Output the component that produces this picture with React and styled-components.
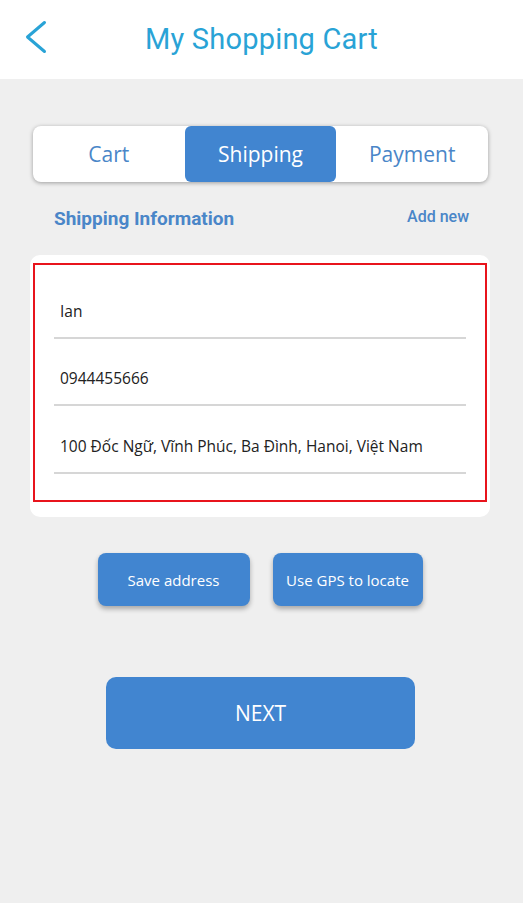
import React from 'react';
import styled, { createGlobalStyle } from 'styled-components';

const GlobalStyle = createGlobalStyle`
  html, body {
    margin: 0;
    padding: 0;
    background: #efefef;
  }
  body {
    font-family: 'Open Sans', 'Noto Sans', sans-serif;
  }
`;

const Page = styled.div`
  width: 523px;
  min-height: 903px;
  background: #efefef;
  display: flex;
  flex-direction: column;
`;

const Header = styled.header`
  height: 79px;
  background: #ffffff;
  position: relative;
  display: flex;
  align-items: center;
  justify-content: center;
`;

const BackButton = styled.button`
  position: absolute;
  left: 22px;
  top: 18px;
  width: 28px;
  height: 38px;
  border: 0;
  padding: 0;
  background: transparent;
  display: flex;
`;

const Title = styled.h1`
  margin: 0 0 2px 0;
  font-family: Roboto, sans-serif;
  font-weight: 400;
  font-size: 29px;
  color: #29a3d6;
  letter-spacing: 0.2px;
`;

const Content = styled.main`
  display: flex;
  flex-direction: column;
  padding: 47px 33px 0 30px;
`;

const Tabs = styled.div`
  margin: 0 2px 0 3px;
  height: 56px;
  background: #ffffff;
  border-radius: 8px;
  box-shadow: 0 1px 4px rgba(0, 0, 0, 0.35);
  display: grid;
  grid-template-columns: repeat(3, 1fr);
`;

const Tab = styled.div`
  display: flex;
  align-items: center;
  justify-content: center;
  border-radius: 6px;
  font-size: 21px;
  color: ${(p) => (p.$active ? '#ffffff' : '#4a86c8')};
  background: ${(p) => (p.$active ? '#4185d0' : 'transparent')};
`;

const SectionHead = styled.div`
  display: flex;
  justify-content: space-between;
  align-items: center;
  padding: 0 21px 0 24px;
  margin-top: 23px;
  height: 26px;
  font-family: Roboto, sans-serif;
  color: #4a86c8;
`;

const SectionTitle = styled.span`
  font-size: 19px;
  font-weight: 700;
`;

const AddLink = styled.span`
  font-size: 16px;
  font-weight: 500;
  margin-top: -4px;
`;

const Card = styled.div`
  margin-top: 24px;
  background: #ffffff;
  border-radius: 10px;
  padding: 8px 3px 15px 3px;
`;

const Form = styled.div`
  border: 2px solid #e8141c;
  padding: 0 19px 26px 19px;
  display: flex;
  flex-direction: column;
`;

const Field = styled.div`
  height: ${(p) => p.$h}px;
  display: flex;
  align-items: flex-end;
  padding: 0 0 15px 6px;
  box-sizing: border-box;
  border-bottom: 2px solid #d6d6d6;
  font-size: 15.5px;
  color: #222222;
`;

const ButtonRow = styled.div`
  display: flex;
  justify-content: center;
  gap: 23px;
  margin-top: 36px;
`;

const SmallButton = styled.button`
  width: ${(p) => p.$w}px;
  height: 53px;
  border: 0;
  border-radius: 8px;
  background: #4185d0;
  color: #ffffff;
  font-family: 'Open Sans', sans-serif;
  font-size: 15px;
  box-shadow: 0 3px 5px rgba(0, 0, 0, 0.3);
`;

const NextButton = styled.button`
  align-self: center;
  margin-top: 71px;
  margin-left: 1px;
  width: 309px;
  height: 72px;
  border: 0;
  border-radius: 10px;
  background: #4185d0;
  color: #ffffff;
  font-family: 'Open Sans', sans-serif;
  font-size: 21px;
`;

export default function App() {
  return (
    <Page>
      <GlobalStyle />
      <Header>
        <BackButton aria-label="back">
          <svg width="28" height="38" viewBox="0 0 28 38">
            <path d="M22.5 4.5 L5.5 19 L22.5 33.5" fill="none" stroke="#29a3d6" strokeWidth="3" strokeLinecap="round" strokeLinejoin="round" />
          </svg>
        </BackButton>
        <Title>My Shopping Cart</Title>
      </Header>
      <Content>
        <Tabs>
          <Tab>Cart</Tab>
          <Tab $active>Shipping</Tab>
          <Tab>Payment</Tab>
        </Tabs>
        <SectionHead>
          <SectionTitle>Shipping Information</SectionTitle>
          <AddLink>Add new</AddLink>
        </SectionHead>
        <Card>
          <Form>
            <Field $h={74}>Ian</Field>
            <Field $h={67}>0944455666</Field>
            <Field $h={68}>100 Đốc Ngữ, Vĩnh Phúc, Ba Đình, Hanoi, Việt Nam</Field>
          </Form>
        </Card>
        <ButtonRow>
          <SmallButton $w={152}>Save address</SmallButton>
          <SmallButton $w={150}>Use GPS to locate</SmallButton>
        </ButtonRow>
        <NextButton>NEXT</NextButton>
      </Content>
    </Page>
  );
}
